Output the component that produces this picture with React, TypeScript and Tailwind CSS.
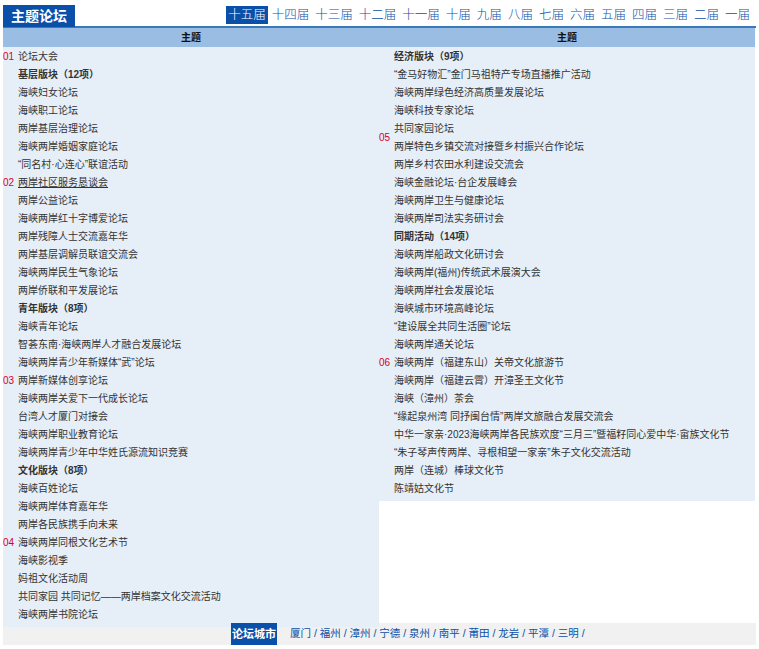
const TABS = ["十五届", "十四届", "十三届", "十二届", "十一届", "十届", "九届", "八届", "七届", "六届", "五届", "四届", "三届", "二届", "一届"];

type Row = { t: string; n?: string; b?: boolean; u?: boolean };

const LEFT: Row[] = [
  { t: "论坛大会", n: "01" },
  { t: "基层版块（12项）", b: true },
  { t: "海峡妇女论坛" },
  { t: "海峡职工论坛" },
  { t: "两岸基层治理论坛" },
  { t: "海峡两岸婚姻家庭论坛" },
  { t: "“同名村·心连心”联谊活动" },
  { t: "两岸社区服务恳谈会", n: "02", u: true },
  { t: "两岸公益论坛" },
  { t: "海峡两岸红十字博爱论坛" },
  { t: "两岸残障人士交流嘉年华" },
  { t: "两岸基层调解员联谊交流会" },
  { t: "海峡两岸民生气象论坛" },
  { t: "两岸侨联和平发展论坛" },
  { t: "青年版块（8项）", b: true },
  { t: "海峡青年论坛" },
  { t: "智荟东南·海峡两岸人才融合发展论坛" },
  { t: "海峡两岸青少年新媒体“武”论坛" },
  { t: "两岸新媒体创享论坛", n: "03" },
  { t: "海峡两岸关爱下一代成长论坛" },
  { t: "台湾人才厦门对接会" },
  { t: "海峡两岸职业教育论坛" },
  { t: "海峡两岸青少年中华姓氏源流知识竞赛" },
  { t: "文化版块（8项）", b: true },
  { t: "海峡百姓论坛" },
  { t: "海峡两岸体育嘉年华" },
  { t: "两岸各民族携手向未来" },
  { t: "海峡两岸同根文化艺术节", n: "04" },
  { t: "海峡影视季" },
  { t: "妈祖文化活动周" },
  { t: "共同家园 共同记忆——两岸档案文化交流活动" },
  { t: "海峡两岸书院论坛" },
];

const RIGHT_A: Row[] = [
  { t: "经济版块（9项）", b: true },
  { t: "“金马好物汇”金门马祖特产专场直播推广活动" },
  { t: "海峡两岸绿色经济高质量发展论坛" },
  { t: "海峡科技专家论坛" },
];
const RIGHT_05: Row[] = [{ t: "共同家园论坛" }, { t: "两岸特色乡镇交流对接暨乡村振兴合作论坛" }];
const RIGHT_B: Row[] = [
  { t: "两岸乡村农田水利建设交流会" },
  { t: "海峡金融论坛·台企发展峰会" },
  { t: "海峡两岸卫生与健康论坛" },
  { t: "海峡两岸司法实务研讨会" },
  { t: "同期活动（14项）", b: true },
  { t: "海峡两岸船政文化研讨会" },
  { t: "海峡两岸(福州)传统武术展演大会" },
  { t: "海峡两岸社会发展论坛" },
  { t: "海峡城市环境高峰论坛" },
  { t: "“建设展全共同生活圈”论坛" },
  { t: "海峡两岸通关论坛" },
  { t: "海峡两岸（福建东山）关帝文化旅游节", n: "06" },
  { t: "海峡两岸（福建云霄）开漳圣王文化节" },
  { t: "海峡（漳州）茶会" },
  { t: "“缘起泉州湾 同抒闽台情”两岸文旅融合发展交流会" },
  { t: "中华一家亲·2023海峡两岸各民族欢度“三月三”暨福籽同心爱中华·畲族文化节" },
  { t: "“朱子琴声传两岸、寻根相望一家亲”朱子文化交流活动" },
  { t: "两岸（连城）棒球文化节" },
  { t: "陈靖姑文化节" },
];

const CITIES = ["厦门", "福州", "漳州", "宁德", "泉州", "南平", "莆田", "龙岩", "平潭", "三明"];

function Line({ r }: { r: Row }) {
  return (
    <div className="flex h-[18px] items-center">
      <span className="w-[15px] shrink-0 text-[10px] text-[#d9001b]">{r.n}</span>
      <span className={`whitespace-nowrap text-[10px] text-[#333] ${r.b ? "font-bold" : ""} ${r.u ? "underline" : ""}`}>{r.t}</span>
    </div>
  );
}

export default function App() {
  return (
    <div className="w-[759px] h-[649px] bg-white px-[3px] pt-[5px]" style={{ fontFamily: '"Liberation Sans", "Noto Sans CJK SC", sans-serif' }}>
      <div className="flex items-end justify-between h-[23px] border-b-2 border-[#3b78b8]">
        <div className="bg-[#0a4fa8] text-white font-bold text-[14px] h-[22px] leading-[22px] px-[8px] w-[72px] mb-[-1px]">主题论坛</div>
        <div className="flex items-center gap-[2px] pb-[2px] pr-[4px]">
          {TABS.map((t, i) => (
            <span key={t} className={`text-[12.5px] leading-[18px] px-[2px] font-light ${i === 0 ? "bg-[#0a4fa8] text-white" : "text-[#0a4fa8]"}`}>{t}</span>
          ))}
        </div>
      </div>
      <div className="grid grid-cols-[376px_376px] items-start">
        <div className="bg-[#e6eef7] pb-[4px]">
          <div className="h-[19px] bg-[#99bde3] text-center text-[10px] font-bold leading-[19px] text-[#111]">主题</div>
          {LEFT.map((r, i) => <Line key={i} r={r} />)}
        </div>
        <div className="bg-[#e6eef7] pb-[4px]">
          <div className="h-[19px] bg-[#99bde3] text-center text-[10px] font-bold leading-[19px] text-[#111]">主题</div>
          {RIGHT_A.map((r, i) => <Line key={i} r={r} />)}
          <div className="flex">
            <span className="w-[15px] shrink-0 self-center text-[10px] text-[#d9001b]">05</span>
            <div>
              {RIGHT_05.map((r, i) => (
                <div key={i} className="flex h-[18px] items-center text-[10px] text-[#333] whitespace-nowrap">{r.t}</div>
              ))}
            </div>
          </div>
          {RIGHT_B.map((r, i) => <Line key={i} r={r} />)}
        </div>
      </div>
      <div className="flex h-[22px] items-center gap-[13px] bg-[#f1f1f1] mt-[-4px] pl-[228px]">
        <span className="bg-[#0a4fa8] text-white font-bold text-[11px] h-[22px] leading-[22px] px-[1px]">论坛城市</span>
        <span className="text-[10.5px] text-[#0a4fa8]">{CITIES.map((c) => `${c} / `).join("")}</span>
      </div>
    </div>
  );
}
